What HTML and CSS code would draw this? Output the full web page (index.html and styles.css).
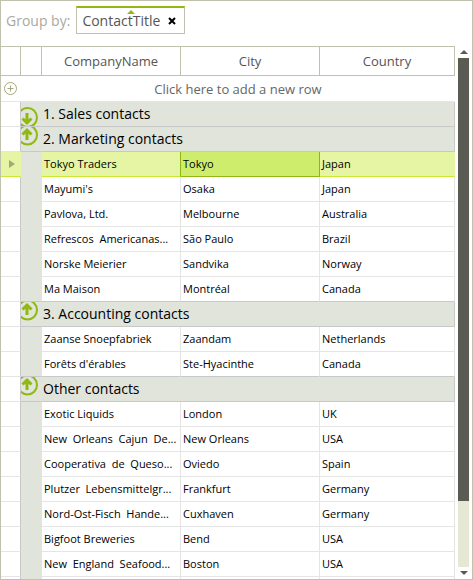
FILE: index.html
```html
<!DOCTYPE html>
<html lang="en">
<head>
<meta charset="utf-8">
<title>Contacts</title>
<link rel="stylesheet" href="styles.css">
</head>
<body>
<svg class="defs" aria-hidden="true">
  <symbol id="up" viewBox="0 0 18 24"><circle cx="6.500" cy="8" r="9.500"/><path class="arrow" d="M6 13V3M1.500 7.500L6 3L10.500 7.500"/></symbol>
  <symbol id="down" viewBox="0 0 18 24"><circle cx="6.500" cy="15.500" r="9.500"/><path class="arrow" d="M6 11V21M1.500 16.500L6 21L10.500 16.500"/></symbol>
</svg>
<main class="grid">
  <header class="group-panel">
    <span class="group-label">Group by:</span>
    <div class="chip">
      <svg class="chip-sort" viewBox="0 0 8 4" aria-hidden="true"><path d="M0 4L4 0L8 4z"/></svg>
      <span>ContactTitle</span>
      <button class="chip-close" aria-label="Remove grouping"><svg viewBox="0 0 8 8" aria-hidden="true"><path d="M1 1L7 7M7 1L1 7"/></svg></button>
    </div>
  </header>
  <div class="body">
    <table class="table">
      <colgroup><col class="col-row"><col class="col-indent"><col class="col-data"><col class="col-data"><col></colgroup>
      <thead>
        <tr><th></th><th></th><th>CompanyName</th><th>City</th><th>Country</th></tr>
      </thead>
      <tbody>
        <tr class="add"><td colspan="5"><button class="add-button"><svg class="plus" viewBox="0 0 13 13" aria-hidden="true"><circle cx="6.500" cy="6.500" r="6"/><path d="M3.500 6.500H9.500M6.500 3.500V9.500"/></svg><span>Click here to add a new row</span></button></td></tr>
        <tr class="group"><td></td><td class="toggle"><button aria-label="Expand"><svg><use href="#down"/></svg></button></td><td colspan="3">1. Sales contacts</td></tr>
        <tr class="group"><td></td><td class="toggle"><button aria-label="Collapse"><svg><use href="#up"/></svg></button></td><td colspan="3">2. Marketing contacts</td></tr>
        <tr class="selected"><td><svg class="marker" viewBox="0 0 6 8" aria-hidden="true"><path d="M0 0L6 4L0 8z"/></svg></td><td></td><td>Tokyo Traders</td><td class="current">Tokyo</td><td>Japan</td></tr>
        <tr><td></td><td></td><td>Mayumi's</td><td>Osaka</td><td>Japan</td></tr>
        <tr><td></td><td></td><td>Pavlova, Ltd.</td><td>Melbourne</td><td>Australia</td></tr>
        <tr><td></td><td></td><td>Refrescos &nbsp;Americanas...</td><td>São Paulo</td><td>Brazil</td></tr>
        <tr><td></td><td></td><td>Norske Meierier</td><td>Sandvika</td><td>Norway</td></tr>
        <tr class="last"><td></td><td></td><td>Ma Maison</td><td>Montréal</td><td>Canada</td></tr>
        <tr class="group"><td></td><td class="toggle"><button aria-label="Collapse"><svg><use href="#up"/></svg></button></td><td colspan="3">3. Accounting contacts</td></tr>
        <tr><td></td><td></td><td>Zaanse Snoepfabriek</td><td>Zaandam</td><td>Netherlands</td></tr>
        <tr class="last"><td></td><td></td><td>Forêts d'érables</td><td>Ste-Hyacinthe</td><td>Canada</td></tr>
        <tr class="group"><td></td><td class="toggle"><button aria-label="Collapse"><svg><use href="#up"/></svg></button></td><td colspan="3">Other contacts</td></tr>
        <tr><td></td><td></td><td>Exotic Liquids</td><td>London</td><td>UK</td></tr>
        <tr><td></td><td></td><td>New &nbsp;Orleans &nbsp;Cajun &nbsp;De...</td><td>New Orleans</td><td>USA</td></tr>
        <tr><td></td><td></td><td>Cooperativa &nbsp;de &nbsp;Queso...</td><td>Oviedo</td><td>Spain</td></tr>
        <tr><td></td><td></td><td>Plutzer &nbsp;Lebensmittelgr...</td><td>Frankfurt</td><td>Germany</td></tr>
        <tr><td></td><td></td><td>Nord-Ost-Fisch &nbsp;Hande...</td><td>Cuxhaven</td><td>Germany</td></tr>
        <tr><td></td><td></td><td>Bigfoot Breweries</td><td>Bend</td><td>USA</td></tr>
        <tr><td></td><td></td><td>New &nbsp;England &nbsp;Seafood...</td><td>Boston</td><td>USA</td></tr>
        <tr><td></td><td></td><td></td><td></td><td></td></tr>
      </tbody>
    </table>
    <div class="scrollbar">
      <button aria-label="Scroll up"><svg viewBox="0 0 8 4" aria-hidden="true"><path d="M0 4L4 0L8 4z"/></svg></button>
      <div class="track"><div class="thumb"></div></div>
      <button aria-label="Scroll down"><svg viewBox="0 0 8 4" aria-hidden="true"><path d="M0 0L4 4L8 0z"/></svg></button>
    </div>
  </div>
</main>
</body>
</html>
```

FILE: styles.css
```css
* { box-sizing: border-box; }

body {
  margin: 0;
  font-family: "Open Sans", "Noto Sans", sans-serif;
  font-size: 11px;
  color: #000;
}

button {
  display: block;
  padding: 0;
  border: 0;
  background: none;
  font: inherit;
  color: inherit;
}

svg { display: block; }

.defs { position: absolute; width: 0; height: 0; }

.grid {
  display: flex;
  flex-direction: column;
  height: 100vh;
  border: 1px solid #c1c2ae;
  background: #fff;
  overflow: hidden;
}

.group-panel {
  display: flex;
  flex: none;
  align-items: flex-start;
  gap: 6px;
  padding: 5px;
  height: 45px;
  font-size: 14px;
  line-height: 20px;
}

.group-label { padding-top: 5px; color: #a9a9a0; }

.chip {
  position: relative;
  display: flex;
  align-items: center;
  gap: 8px;
  height: 28px;
  padding: 0 8px 0 5px;
  border: 1px solid #c1c2ae;
  border-top: 2px solid #8fb812;
  color: #555;
}

.chip-sort {
  position: absolute;
  top: 2px;
  left: 50%;
  width: 8px;
  height: 4px;
  margin-left: -4px;
  fill: #8fb812;
}

.chip-close svg { width: 8px; height: 8px; stroke: #000; stroke-width: 2; }

.body { display: flex; flex: 1; min-height: 0; }

.table {
  flex: 1;
  align-self: flex-start;
  width: 0;
  table-layout: fixed;
  border-collapse: separate;
  border-spacing: 0;
}

.col-row { width: 20px; }
.col-indent { width: 21px; }
.col-data { width: 139px; }

th {
  height: 30px;
  padding: 0;
  border: solid #c1c2ae;
  border-width: 1px 1px 1px 0;
  font-size: 13px;
  font-weight: 400;
  line-height: 20px;
  color: #555;
}

td {
  height: 25px;
  padding: 0 0 0 2px;
  border: solid #e5e5e5;
  border-width: 0 1px 1px 0;
  line-height: 16px;
  white-space: nowrap;
  overflow: hidden;
}

td:first-child { border-right-color: #c8c8c8; }

td:nth-child(2) {
  background: #e0e4db;
  border-color: #e0e4db;
}

.add td { height: 26px; padding: 0; border-right-color: #fff; }

.add-button {
  display: flex;
  align-items: center;
  gap: 5px;
  width: 100%;
  padding: 0 0 0 3px;
  font-size: 13px;
  line-height: 20px;
  color: #666;
}

.add-button span { flex: 1; }

.plus { width: 13px; height: 13px; fill: none; stroke: #a3a87c; }

.group td:nth-child(n+2) {
  padding-left: 1px;
  background: #e0e4db;
  border-color: #c8c8c8;
  font-size: 14px;
  line-height: 20px;
}

.group .toggle.toggle.toggle { padding: 0; border-right-color: #e0e4db; }

.last td:nth-child(n+2) { border-bottom-color: #c8c8c8; }

.toggle svg {
  width: 18px;
  height: 24px;
  fill: none;
  stroke: #8fb812;
  stroke-width: 2;
}

.arrow { stroke-width: 3; }

.selected td:not(:nth-child(2)) {
  background: #e6f5a4;
  border-color: #c9e834;
  border-right-color: #e6f5a4;
}

.selected td:nth-child(3):nth-child(3) { border-right-color: #8fb812; }

.selected .current.current {
  background: #cfed6c;
  border-color: #8fb812;
}

.marker { width: 6px; height: 8px; margin-left: 6px; fill: #a3a87c; }

.scrollbar {
  display: flex;
  flex-direction: column;
  flex: none;
  width: 17px;
  padding: 0 3px;
}

.scrollbar button {
  display: grid;
  place-items: center;
  height: 12px;
}

.scrollbar svg { width: 8px; height: 4px; fill: #5a5b53; }

.track { flex: 1; background: #e4e8d4; }

.thumb { height: 87%; background: #5a5b53; }
```
